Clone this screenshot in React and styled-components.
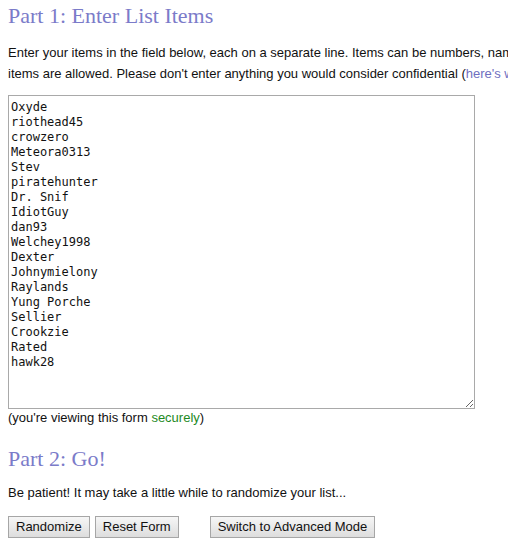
import styled, { createGlobalStyle } from "styled-components";

const items = [
  "Oxyde",
  "riothead45",
  "crowzero",
  "Meteora0313",
  "Stev",
  "piratehunter",
  "Dr. Snif",
  "IdiotGuy",
  "dan93",
  "Welchey1998",
  "Dexter",
  "Johnymielony",
  "Raylands",
  "Yung Porche",
  "Sellier",
  "Crookzie",
  "Rated",
  "hawk28",
];

const GlobalStyle = createGlobalStyle`
  html, body {
    margin: 0;
    padding: 0;
    background: #ffffff;
    overflow: hidden;
  }
  body {
    font-family: "Liberation Sans", Arial, sans-serif;
    color: #111111;
  }
`;

const Page = styled.div`
  width: 780px;
  padding: 0 8px;
`;

const Heading = styled.h2`
  margin: ${(props) => props.$top}px 0 0;
  font-family: "Liberation Serif", Georgia, serif;
  font-weight: normal;
  font-size: 22px;
  line-height: 32px;
  color: #7b7bc9;
`;

const Text = styled.p`
  margin: ${(props) => props.$top}px 0 0;
  font-size: 13px;
  line-height: 21px;
`;

const Link = styled.a`
  color: #6f6fc0;
  text-decoration: none;
`;

const Secure = styled.span`
  color: #1e8a1e;
`;

const ListBox = styled.textarea`
  display: block;
  box-sizing: border-box;
  margin: 11px 0 0;
  width: 467px;
  height: 314px;
  padding: 4px 2px 2px;
  border: 1px solid #a9a9a9;
  font-family: "DejaVu Sans Mono", "Liberation Mono", monospace;
  font-size: 12px;
  line-height: 15px;
  color: #111111;
  resize: both;
  outline: none;
`;

const Note = styled.div`
  font-size: 13px;
  line-height: 18px;
`;

const Buttons = styled.div`
  display: flex;
  align-items: center;
  gap: 5px;
  margin-top: 13px;
`;

const Button = styled.button`
  box-sizing: border-box;
  height: 22px;
  margin-left: ${(props) => (props.$spaced ? "26px" : "0")};
  padding: 0 7px;
  border: 1px solid #a6a6a6;
  border-radius: 0;
  background: linear-gradient(#f6f6f6, #dddddd);
  font-family: "Liberation Sans", Arial, sans-serif;
  font-size: 13px;
  line-height: 18px;
  color: #111111;
`;

export default function App() {
  return (
    <>
      <GlobalStyle />
      <Page>
        <Heading $top={0}>Part 1: Enter List Items</Heading>
        <Text $top={10}>
          Enter your items in the field below, each on a separate line. Items
          can be numbers, names, email addresses, etc. A maximum of 10,000
          items are allowed. Please don't enter anything you would consider
          confidential (<Link href="#">here's why</Link>).
        </Text>
        <ListBox defaultValue={items.join("\n")} spellCheck={false} />
        <Note>
          (you're viewing this form <Secure>securely</Secure>)
        </Note>
        <Heading $top={16}>Part 2: Go!</Heading>
        <Text $top={7}>
          Be patient! It may take a little while to randomize your list...
        </Text>
        <Buttons>
          <Button>Randomize</Button>
          <Button>Reset Form</Button>
          <Button $spaced>Switch to Advanced Mode</Button>
        </Buttons>
      </Page>
    </>
  );
}
